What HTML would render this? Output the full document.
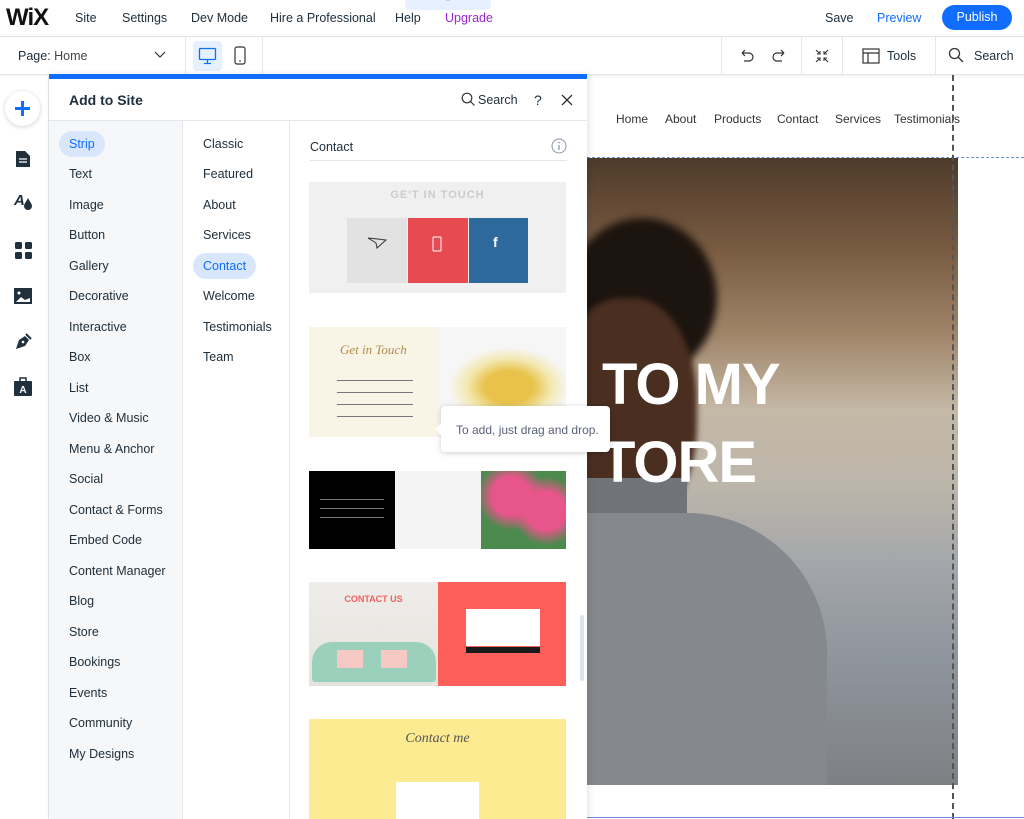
<!DOCTYPE html>
<html><head><meta charset="utf-8"><style>
*{margin:0;padding:0;box-sizing:border-box}
body{width:1024px;height:819px;overflow:hidden;font-family:"Liberation Sans",sans-serif;color:#20303c;background:#fff;position:relative}
.a{position:absolute}
.t{font-size:12.5px;position:absolute;white-space:nowrap}
</style></head><body>

<!-- canvas -->
<div class="a" style="left:587px;top:75px;width:437px;height:744px;background:#fff"></div>
<div class="t" style="left:616px;top:112px;color:#333;font-size:12px">Home</div>
<div class="t" style="left:665px;top:112px;color:#333;font-size:12px">About</div>
<div class="t" style="left:714px;top:112px;color:#333;font-size:12px">Products</div>
<div class="t" style="left:777px;top:112px;color:#333;font-size:12px">Contact</div>
<div class="t" style="left:835px;top:112px;color:#333;font-size:12px">Services</div>
<div class="t" style="left:894px;top:112px;color:#333;font-size:12px">Testimonials</div>
<div class="a" style="left:587px;top:157px;width:437px;border-top:1px dashed #6d8fd6"></div>
<div class="a" style="left:587px;top:158px;width:371px;height:627px;overflow:hidden;background:
linear-gradient(180deg,#4e3a2a 0%,#7a5c42 15%,#a08468 28%,#c4b8a6 40%,#bdb6aa 52%,#a3a6aa 65%,#8e959d 80%,#7e8084 100%)">
  <div class="a" style="left:-20px;top:60px;width:150px;height:160px;border-radius:50%;background:#1c140f;filter:blur(4px)"></div>
  <div class="a" style="left:-30px;top:140px;width:140px;height:230px;border-radius:45%;background:#4a2e20;filter:blur(3px)"></div>
  <div class="a" style="left:-10px;top:320px;width:110px;height:60px;background:#707377"></div>
  <div class="a" style="left:-10px;top:355px;width:250px;height:300px;background:#85888c;border-radius:0 140px 0 0"></div>
</div>
<div class="a" style="left:602px;top:350px;color:#fff;font-weight:bold;font-size:58px;line-height:70px;letter-spacing:-1px">TO MY</div>
<div class="a" style="left:600px;top:428px;color:#fff;font-weight:bold;font-size:58px;line-height:70px;letter-spacing:-1px">TORE</div>
<div class="a" style="left:952px;top:75px;height:744px;border-left:2px dashed #555"></div>
<div class="a" style="left:587px;top:817px;width:437px;border-top:1px solid #6d8fd6"></div>

<!-- top bar -->
<div class="a" style="left:0;top:0;width:1024px;height:37px;background:#fff;border-bottom:1px solid #e3e7ec"></div>
<div class="a" style="left:6px;top:4px;font-size:24px;font-weight:bold;letter-spacing:-1px;color:#111">WiX</div>
<div class="t" style="left:75px;top:11px">Site</div>
<div class="t" style="left:122px;top:11px">Settings</div>
<div class="t" style="left:191px;top:11px">Dev Mode</div>
<div class="t" style="left:270px;top:11px">Hire a Professional</div>
<div class="t" style="left:395px;top:11px">Help</div>
<div class="t" style="left:445px;top:11px;color:#9a27d5">Upgrade</div>
<div class="a" style="left:405px;top:0;width:86px;height:10px;background:#e7f0ff;border-radius:0 0 5px 5px;font-size:9px;text-align:center;line-height:6px">ˆ</div>
<div class="t" style="left:825px;top:11px">Save</div>
<div class="t" style="left:877px;top:11px;color:#116dff">Preview</div>
<div class="a" style="left:942px;top:5px;width:70px;height:25px;background:#116dff;border-radius:13px;color:#fff;font-size:12.5px;text-align:center;line-height:25px">Publish</div>

<!-- second bar -->
<div class="a" style="left:0;top:37px;width:1024px;height:38px;background:#fff;border-bottom:1px solid #e3e7ec;box-shadow:0 1px 3px rgba(0,0,0,.08)"></div>
<div class="t" style="left:18px;top:49px">Page: <span style="color:#444">Home</span></div>
<svg class="a" style="left:154px;top:51px" width="12" height="8"><path d="M1 1l5 5 5-5" fill="none" stroke="#333" stroke-width="1.2"/></svg>
<div class="a" style="top:37px;height:38px;border-left:1px solid #e3e7ec;left:185px"></div>
<div class="a" style="left:193px;top:41px;width:29px;height:30px;background:#e7f0ff;border-radius:4px"></div>
<svg class="a" style="left:198px;top:47px" width="20" height="18"><rect x="1.5" y="1.5" width="16" height="11" rx="1" fill="none" stroke="#116dff" stroke-width="1.3"/><path d="M9.5 13v3M6 16.5h7" stroke="#116dff" stroke-width="1.3"/></svg>
<svg class="a" style="left:234px;top:46px" width="12" height="20"><rect x="1" y="1" width="10" height="17" rx="2" fill="none" stroke="#333" stroke-width="1.2"/><path d="M5 15h2" stroke="#333"/></svg>
<div class="a" style="left:262px;top:37px;height:38px;border-left:1px solid #e3e7ec"></div>
<div class="a" style="left:721px;top:37px;height:38px;border-left:1px solid #e3e7ec"></div>
<div class="a" style="left:801px;top:37px;height:38px;border-left:1px solid #e3e7ec"></div>
<div class="a" style="left:842px;top:37px;height:38px;border-left:1px solid #e3e7ec"></div>
<div class="a" style="left:935px;top:37px;height:38px;border-left:1px solid #e3e7ec"></div>
<svg class="a" style="left:738px;top:48px" width="50" height="16"><path d="M4 5h7a4 4 0 010 8H6M4 5l3-3M4 5l3 3" fill="none" stroke="#333" stroke-width="1.2"/><path d="M46 5h-7a4 4 0 000 8h5M46 5l-3-3M46 5l-3 3" fill="none" stroke="#333" stroke-width="1.2"/></svg>
<svg class="a" style="left:814px;top:48px" width="16" height="16"><path d="M2 2l4 4M6 3v3H3M14 2l-4 4M10 3v3h3M2 14l4-4M3 10h3v3M14 14l-4-4M13 10h-3v3" fill="none" stroke="#333" stroke-width="1.1"/></svg>
<svg class="a" style="left:862px;top:48px" width="18" height="16"><rect x="1" y="1" width="16" height="14" fill="none" stroke="#333" stroke-width="1.2"/><path d="M1 5h16M6 5v10" stroke="#333" stroke-width="1.2"/></svg>
<div class="t" style="left:887px;top:49px">Tools</div>
<svg class="a" style="left:948px;top:47px" width="16" height="16"><circle cx="6.5" cy="6.5" r="5" fill="none" stroke="#333" stroke-width="1.3"/><path d="M10 10l5 5" stroke="#333" stroke-width="1.3"/></svg>
<div class="t" style="left:974px;top:49px">Search</div>

<!-- left rail -->
<div class="a" style="left:0;top:76px;width:49px;height:743px;background:#fff;border-right:1px solid #e3e7ec"></div>
<div class="a" style="left:5px;top:91px;width:35px;height:35px;border-radius:50%;background:#fff;box-shadow:0 1px 5px rgba(0,0,0,.18)"></div>
<svg class="a" style="left:13px;top:99px" width="19" height="19"><path d="M9.5 2v15M2 9.5h15" stroke="#116dff" stroke-width="3"/></svg>
<svg class="a" style="left:15px;top:150px" width="16" height="18"><path d="M1 1h9l5 5v11H1z" fill="#20303c"/><path d="M4 9h8M4 12h8" stroke="#fff" stroke-width="1.3"/></svg>
<div class="a" style="left:14px;top:192px;font-weight:bold;font-size:15px;color:#20303c;font-style:italic">A</div>
<svg class="a" style="left:23px;top:197px" width="10" height="14"><path d="M5 1C3 5 1 7 1 9a4 4 0 008 0C9 7 7 5 5 1z" fill="#20303c"/></svg>
<svg class="a" style="left:15px;top:242px" width="18" height="18"><rect x="0" y="0" width="7" height="7" rx="1.5" fill="#20303c"/><rect x="10" y="0" width="7" height="7" rx="1.5" fill="#20303c"/><rect x="0" y="10" width="7" height="7" rx="1.5" fill="#20303c"/><rect x="10" y="10" width="7" height="7" rx="1.5" fill="#20303c"/></svg>
<svg class="a" style="left:14px;top:288px" width="18" height="16"><rect x="0" y="0" width="18" height="16" fill="#20303c"/><path d="M2 14l5-5 4 3 5-2v4z" fill="#fff"/><circle cx="5" cy="5" r="1.5" fill="#fff"/></svg>
<svg class="a" style="left:14px;top:332px" width="19" height="19"><path d="M2 17l3-9 6-4 4 4-4 6z" fill="#20303c"/><path d="M12 2l5 5" stroke="#20303c" stroke-width="2"/><circle cx="9" cy="10" r="1.3" fill="#fff"/></svg>
<svg class="a" style="left:14px;top:377px" width="18" height="19"><path d="M6 4V1h6v3" fill="none" stroke="#20303c" stroke-width="1.5"/><rect x="0" y="4" width="18" height="15" rx="1" fill="#20303c"/><text x="9" y="16" font-size="10" font-family="Liberation Sans" font-weight="bold" fill="#fff" text-anchor="middle">A</text></svg>

<!-- panel -->
<div class="a" style="left:49px;top:74px;width:538px;height:745px;background:#fff;box-shadow:2px 0 6px rgba(0,0,0,.1)"></div>
<div class="a" style="left:49px;top:74px;width:538px;height:5px;background:#116dff"></div>
<div class="a" style="left:69px;top:92px;font-weight:bold;font-size:14px">Add to Site</div>
<svg class="a" style="left:461px;top:92px" width="15" height="15"><circle cx="6" cy="6" r="4.8" fill="none" stroke="#333" stroke-width="1.2"/><path d="M9.5 9.5l4 4" stroke="#333" stroke-width="1.2"/></svg>
<div class="t" style="left:478px;top:93px">Search</div>
<div class="t" style="left:534px;top:92px;font-size:14px">?</div>
<svg class="a" style="left:561px;top:94px" width="12" height="12"><path d="M1 1l10 10M11 1L1 11" stroke="#333" stroke-width="1.3"/></svg>
<div class="a" style="left:49px;top:120px;width:538px;border-top:1px solid #e3e7ec"></div>
<div class="a" style="left:49px;top:121px;width:134px;height:698px;background:#f5f7f8;border-right:1px solid #e3e7ec"></div>
<div class="a" style="left:289px;top:121px;height:698px;border-left:1px solid #e3e7ec"></div>
<div class="a" style="left:59px;top:131px;width:46px;height:26px;background:#d9e7fd;border-radius:13px"></div>
<div class="t" style="left:69px;top:137px;color:#116dff">Strip</div>
<div class="t" style="left:69px;top:167px">Text</div>
<div class="t" style="left:69px;top:198px">Image</div>
<div class="t" style="left:69px;top:228px">Button</div>
<div class="t" style="left:69px;top:259px">Gallery</div>
<div class="t" style="left:69px;top:289px">Decorative</div>
<div class="t" style="left:69px;top:320px">Interactive</div>
<div class="t" style="left:69px;top:350px">Box</div>
<div class="t" style="left:69px;top:381px">List</div>
<div class="t" style="left:69px;top:411px">Video &amp; Music</div>
<div class="t" style="left:69px;top:442px">Menu &amp; Anchor</div>
<div class="t" style="left:69px;top:472px">Social</div>
<div class="t" style="left:69px;top:503px">Contact &amp; Forms</div>
<div class="t" style="left:69px;top:533px">Embed Code</div>
<div class="t" style="left:69px;top:564px">Content Manager</div>
<div class="t" style="left:69px;top:594px">Blog</div>
<div class="t" style="left:69px;top:625px">Store</div>
<div class="t" style="left:69px;top:655px">Bookings</div>
<div class="t" style="left:69px;top:686px">Events</div>
<div class="t" style="left:69px;top:716px">Community</div>
<div class="t" style="left:69px;top:747px">My Designs</div>

<div class="t" style="left:203px;top:137px">Classic</div>
<div class="t" style="left:203px;top:167px">Featured</div>
<div class="t" style="left:203px;top:198px">About</div>
<div class="t" style="left:203px;top:228px">Services</div>
<div class="a" style="left:193px;top:253px;width:63px;height:26px;background:#d9e7fd;border-radius:13px"></div>
<div class="t" style="left:203px;top:259px;color:#116dff">Contact</div>
<div class="t" style="left:203px;top:289px">Welcome</div>
<div class="t" style="left:203px;top:320px">Testimonials</div>
<div class="t" style="left:203px;top:350px">Team</div>

<div class="t" style="left:310px;top:140px">Contact</div>
<svg class="a" style="left:551px;top:138px" width="16" height="16"><circle cx="8" cy="8" r="7" fill="none" stroke="#8a94b0" stroke-width="1"/><path d="M8 7v5" stroke="#8a94b0" stroke-width="1.3"/><circle cx="8" cy="4.5" r=".9" fill="#8a94b0"/></svg>
<div class="a" style="left:310px;top:160px;width:257px;border-top:1px solid #e3e7ec"></div>
<div class="a" style="left:580px;top:615px;width:4px;height:66px;background:#dfe2ea;border-radius:2px"></div>

<!-- template 1 -->
<div class="a" style="left:309px;top:182px;width:257px;height:111px;background:#f0f0f0"></div>
<div class="a" style="left:309px;top:189px;width:257px;text-align:center;font-size:11px;font-weight:bold;color:#ccc;letter-spacing:1px">GE'T IN TOUCH</div>
<div class="a" style="left:347px;top:218px;width:60px;height:65px;background:#e2e2e2"></div>
<div class="a" style="left:408px;top:218px;width:60px;height:65px;background:#e84a52"></div>
<div class="a" style="left:469px;top:218px;width:59px;height:65px;background:#2d6a9b"></div>
<svg class="a" style="left:367px;top:237px" width="20" height="12"><path d="M1 1l18 2-9 8-1-5z" fill="none" stroke="#333" stroke-width="1"/></svg>
<svg class="a" style="left:432px;top:235px" width="12" height="18"><rect x="1" y="2" width="8" height="14" rx="1" fill="none" stroke="#fff" stroke-width="1"/></svg>
<div class="a" style="left:493px;top:234px;color:#fff;font-weight:bold;font-size:14px">f</div>

<!-- template 2 -->
<div class="a" style="left:309px;top:327px;width:130px;height:110px;background:#f8f4e6"></div>
<div class="a" style="left:340px;top:342px;font-family:'Liberation Serif',serif;font-style:italic;color:#b48c4a;font-size:13px">Get in Touch</div>
<div class="a" style="left:337px;top:380px;width:76px;border-top:1px solid #777"></div>
<div class="a" style="left:337px;top:392px;width:76px;border-top:1px solid #777"></div>
<div class="a" style="left:337px;top:404px;width:76px;border-top:1px solid #777"></div>
<div class="a" style="left:337px;top:416px;width:76px;border-top:1px solid #777"></div>
<div class="a" style="left:439px;top:327px;width:127px;height:110px;background:radial-gradient(ellipse 60px 40px at 70px 60px,#e8c24a 40%,#f3e8b0 70%,#f6f6f6 100%)"></div>

<!-- template 3 -->
<div class="a" style="left:309px;top:471px;width:86px;height:78px;background:#000"></div>
<div class="a" style="left:395px;top:471px;width:86px;height:78px;background:#f4f4f4"></div>
<div class="a" style="left:481px;top:471px;width:85px;height:78px;background:radial-gradient(circle at 30px 25px,#e8558a 25%,transparent 45%),radial-gradient(circle at 65px 40px,#e8558a 25%,transparent 45%),#4c8a4e"></div>
<div class="a" style="left:320px;top:495px;width:64px;height:28px;background:repeating-linear-gradient(#000 0 4px,#777 4px 5px,#000 5px 9px)"></div>

<!-- template 4 -->
<div class="a" style="left:309px;top:582px;width:129px;height:104px;background:linear-gradient(#efede9,#e5e3de)"></div>
<div class="a" style="left:309px;top:594px;width:129px;text-align:center;color:#f26060;font-size:9px;font-weight:bold">CONTACT US</div>
<div class="a" style="left:312px;top:642px;width:124px;height:40px;background:#9bd0bd;border-radius:20px 20px 3px 3px"></div>
<div class="a" style="left:337px;top:650px;width:26px;height:18px;background:#f6c9c4"></div>
<div class="a" style="left:381px;top:650px;width:26px;height:18px;background:#f6c9c4"></div>
<div class="a" style="left:438px;top:582px;width:128px;height:104px;background:#fe5f5b"></div>
<div class="a" style="left:466px;top:609px;width:74px;height:37px;background:#fff"></div>
<div class="a" style="left:466px;top:647px;width:74px;height:6px;background:#1a1a1a"></div>

<!-- template 5 -->
<div class="a" style="left:309px;top:719px;width:257px;height:100px;background:#fdeb92"></div>
<div class="a" style="left:309px;top:731px;width:257px;text-align:center;font-family:'Liberation Serif',serif;font-style:italic;color:#555;font-size:14px">Contact me</div>
<div class="a" style="left:396px;top:782px;width:83px;height:37px;background:#fff"></div>

<!-- tooltip -->
<div class="a" style="left:441px;top:406px;width:169px;height:46px;background:#fff;border-radius:4px;box-shadow:0 1px 6px rgba(0,0,0,.2)"></div>
<div class="a" style="left:435px;top:423px;width:0;height:0;border:6px solid transparent;border-right-color:#fff;border-left:0"></div>
<div class="t" style="left:456px;top:423px;color:#5a6277;font-size:12px">To add, just drag and drop.</div>

</body></html>
